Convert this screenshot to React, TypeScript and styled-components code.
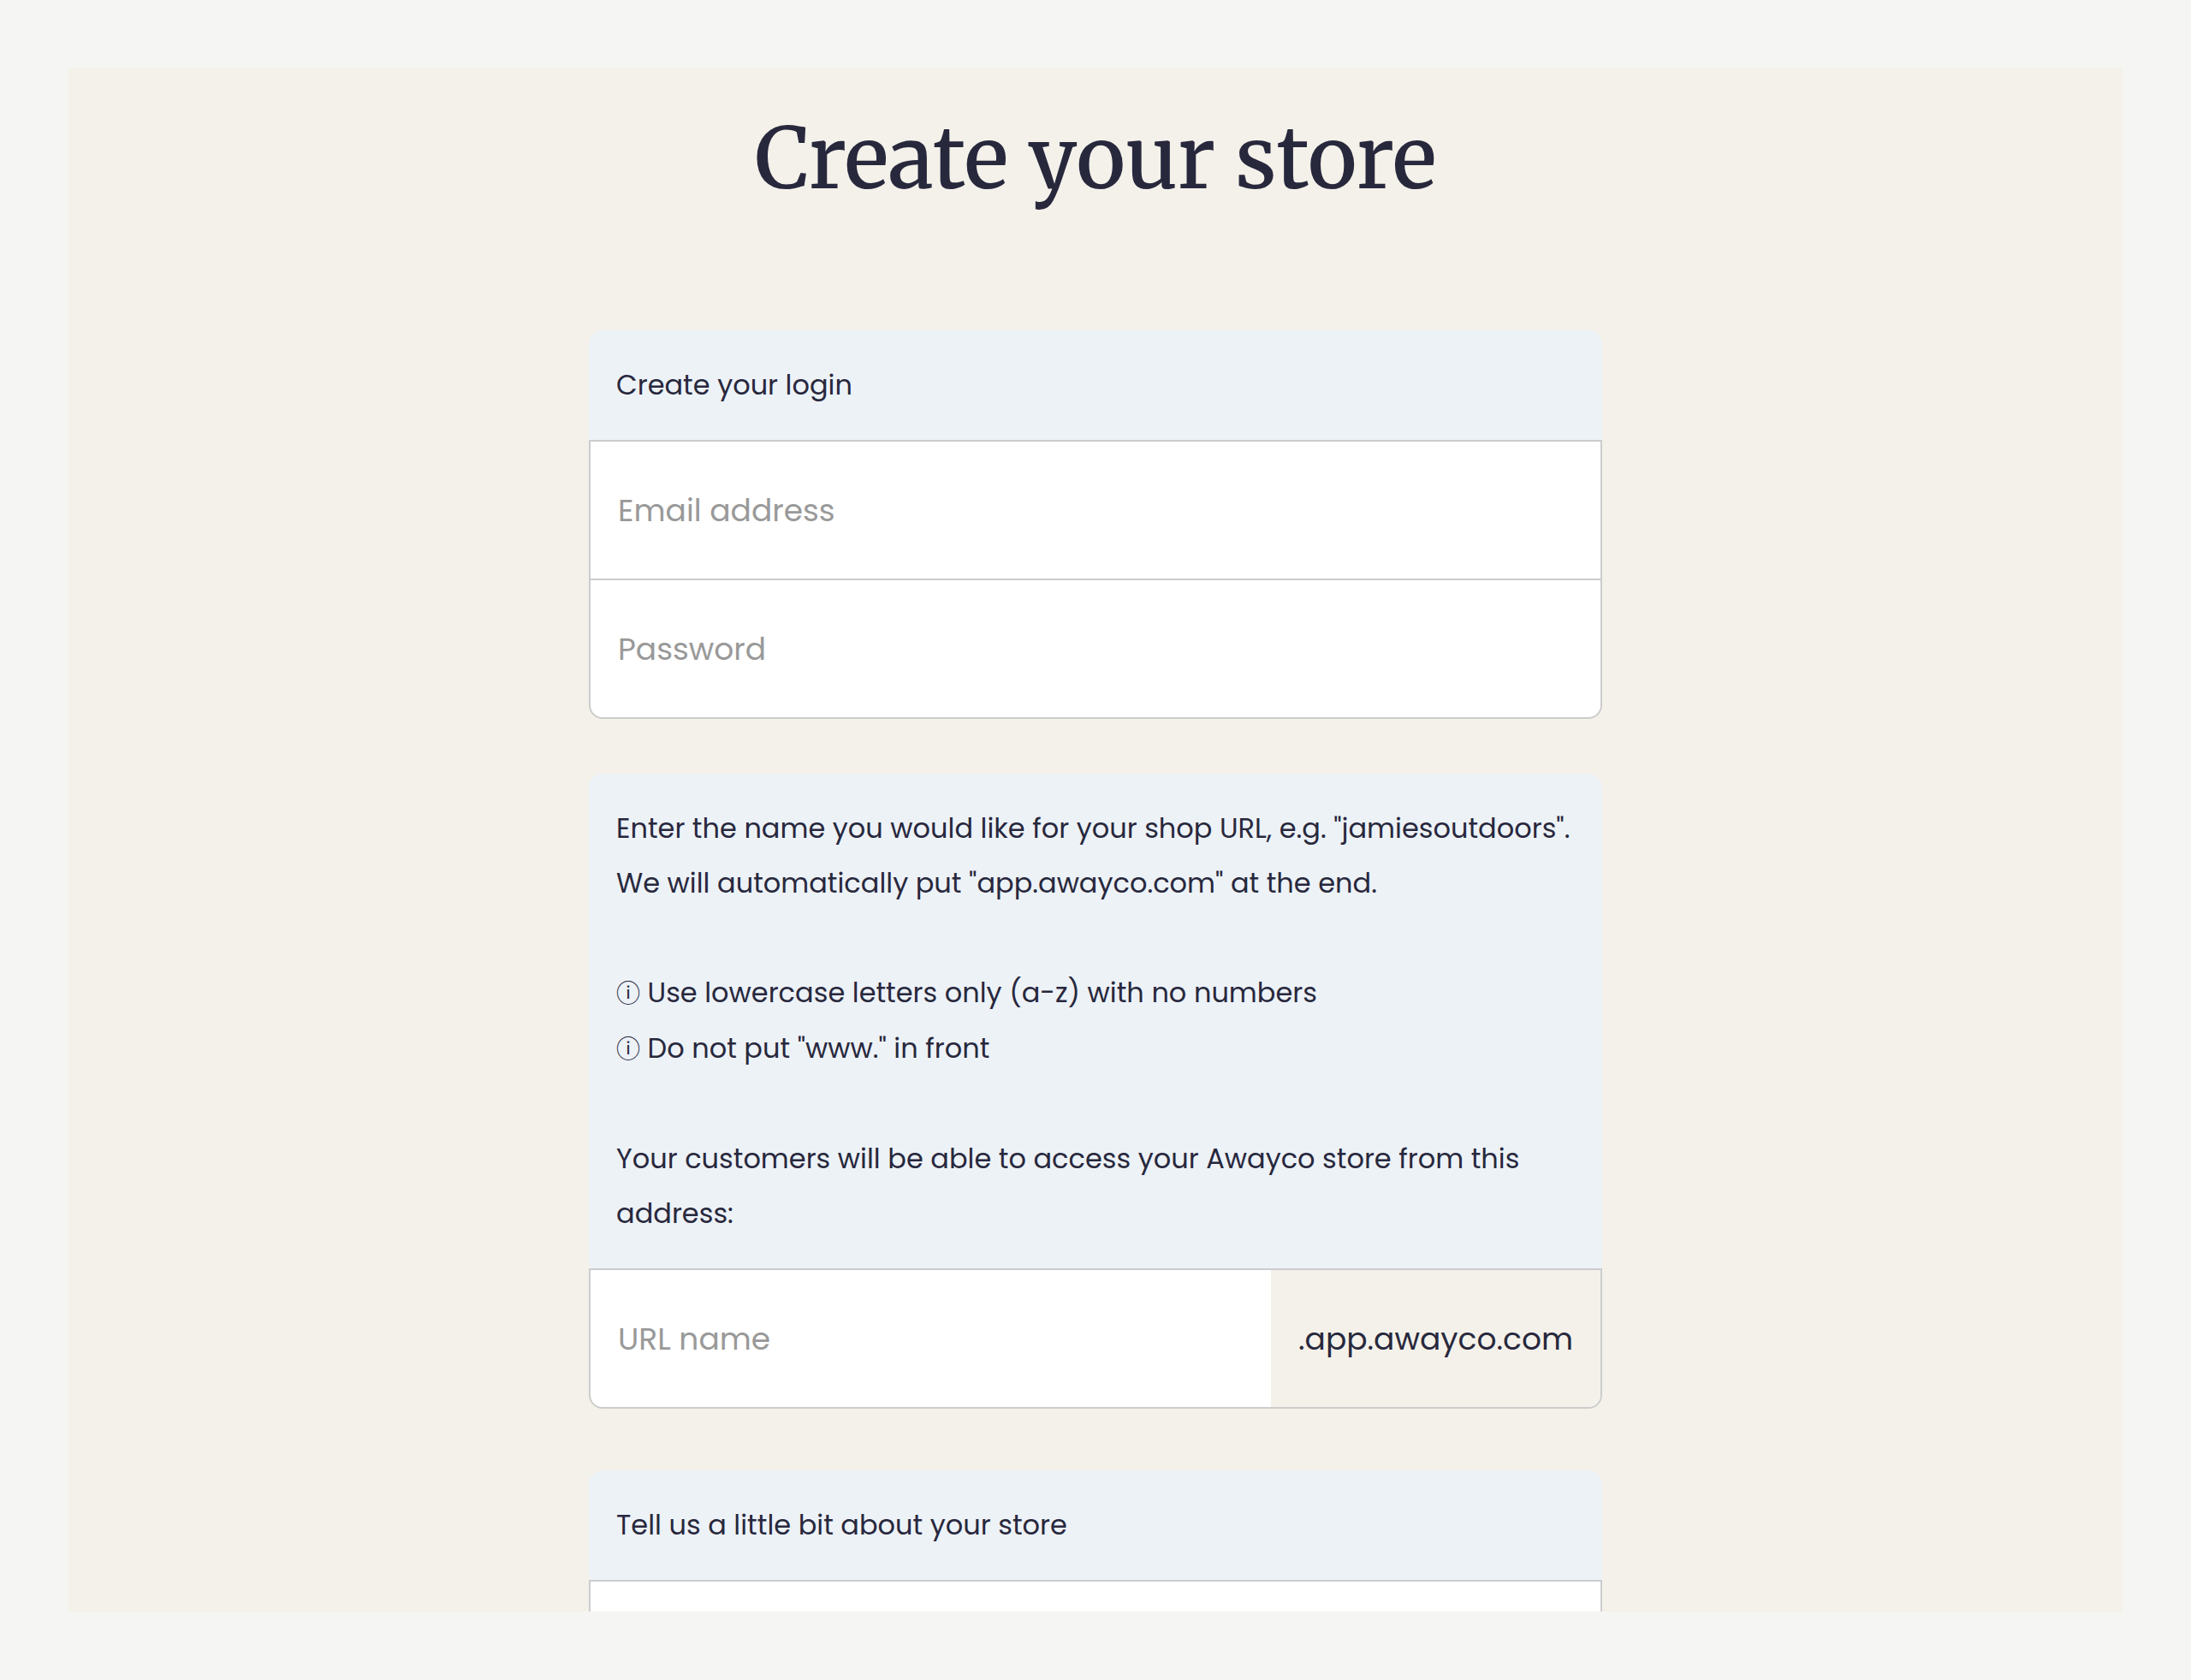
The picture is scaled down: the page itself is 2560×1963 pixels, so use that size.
import React from "react";
import styled, { createGlobalStyle } from "styled-components";

const colors = {
  page: "#f5f5f3",
  panel: "#f4f1ea",
  header: "#edf2f7",
  border: "#cccccc",
  text: "#28283d",
  placeholder: "#999999",
  field: "#ffffff",
};

const GlobalStyle = createGlobalStyle`
  *, *::before, *::after {
    box-sizing: border-box;
  }

  body {
    margin: 0;
    background: ${colors.page};
    color: ${colors.text};
    font-family: Poppins, Inter, "Noto Sans CJK SC", sans-serif;
    font-size: 32px;
    line-height: 64px;
  }
`;

const Page = styled.div`
  display: flex;
  height: 100vh;
  padding: 80px;
`;

const Panel = styled.main`
  flex: 1;
  min-width: 0;
  padding: 0 32px;
  overflow: hidden;
  background: ${colors.panel};
`;

const Title = styled.h1`
  margin: 0;
  padding: 42px 0 136px;
  font-family: Merriweather, "DejaVu Serif", serif;
  font-size: 98px;
  font-weight: 500;
  line-height: 128px;
  text-align: center;
`;

const Form = styled.form`
  max-width: 1184px;
  margin: 0 auto;
`;

const Section = styled.section<{ $gap?: number }>`
  margin-bottom: ${({ $gap = 64 }) => $gap}px;
`;

const SectionHeader = styled.div`
  padding: 32px;
  border-radius: 16px 16px 0 0;
  background: ${colors.header};
`;

const Heading = styled.h2`
  margin: 0;
  font-size: 32px;
  font-weight: 400;
  line-height: 64px;
`;

const Paragraph = styled.p`
  margin: 0;
`;

const Rules = styled.ul`
  margin: 63px 0 65px;
  padding: 0;
  list-style: none;
`;

const Rule = styled.li`
  line-height: 65px;
`;

const InfoMark = styled.span`
  font-size: 28px;
  line-height: 32px;
`;

const Fields = styled.div`
  display: flex;
  flex-direction: column;
  overflow: hidden;
  border: 2px solid ${colors.border};
  border-radius: 0 0 16px 16px;
  background: ${colors.field};
`;

const FieldRow = styled.div`
  display: flex;
  height: 160px;

  & + & {
    height: 162px;
    border-top: 2px solid ${colors.border};
  }
`;

const Input = styled.input`
  flex: 1;
  min-width: 0;
  padding: 2px 32px 0;
  border: 0;
  outline: 0;
  background: transparent;
  color: ${colors.text};
  font: inherit;
  font-size: 36px;

  &::placeholder {
    color: ${colors.placeholder};
    opacity: 1;
  }
`;

const Suffix = styled.span`
  display: flex;
  align-items: center;
  padding: 2px 32px 0;
  background: ${colors.panel};
  font-size: 36px;
`;

export default function App() {
  return (
    <>
      <GlobalStyle />
      <Page>
        <Panel>
          <Title>Create your store</Title>
          <Form>
            <Section aria-labelledby="login-heading">
              <SectionHeader>
                <Heading id="login-heading">Create your login</Heading>
              </SectionHeader>
              <Fields>
                <FieldRow>
                  <Input type="email" aria-label="Email address" placeholder="Email address" />
                </FieldRow>
                <FieldRow>
                  <Input type="password" aria-label="Password" placeholder="Password" />
                </FieldRow>
              </Fields>
            </Section>

            <Section $gap={72}>
              <SectionHeader id="url-help">
                <Paragraph>
                  Enter the name you would like for your shop URL, e.g. "jamiesoutdoors".
                  <br />
                  We will automatically put "app.awayco.com" at the end.
                </Paragraph>
                <Rules>
                  <Rule>
                    <InfoMark>ⓘ</InfoMark> Use lowercase letters only (a-z) with no numbers
                  </Rule>
                  <Rule>
                    <InfoMark>ⓘ</InfoMark> Do not put "www." in front
                  </Rule>
                </Rules>
                <Paragraph>
                  Your customers will be able to access your Awayco store from this address:
                </Paragraph>
              </SectionHeader>
              <Fields>
                <FieldRow>
                  <Input
                    type="text"
                    aria-label="URL name"
                    aria-describedby="url-help"
                    placeholder="URL name"
                  />
                  <Suffix>.app.awayco.com</Suffix>
                </FieldRow>
              </Fields>
            </Section>

            <Section aria-labelledby="about-heading">
              <SectionHeader>
                <Heading id="about-heading">Tell us a little bit about your store</Heading>
              </SectionHeader>
              <Fields>
                <FieldRow>
                  <Input type="text" aria-labelledby="about-heading" />
                </FieldRow>
              </Fields>
            </Section>
          </Form>
        </Panel>
      </Page>
    </>
  );
}
